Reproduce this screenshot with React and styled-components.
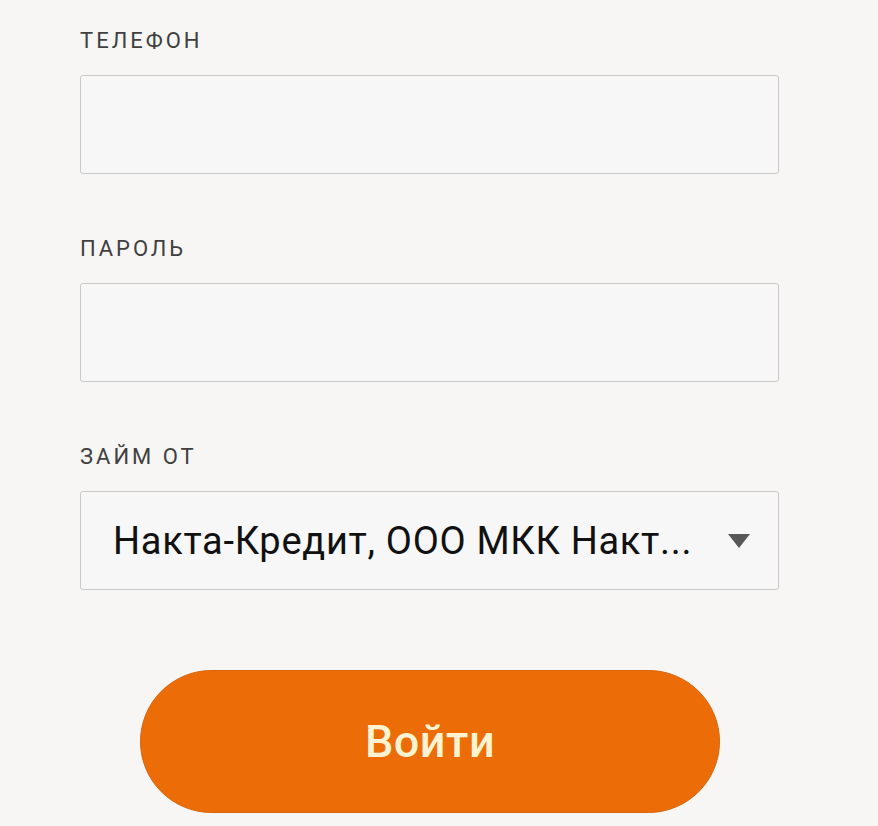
import React from "react";
import styled, { createGlobalStyle } from "styled-components";

const GlobalStyle = createGlobalStyle`
  html, body {
    margin: 0;
    padding: 0;
    background: #f7f6f5;
  }
  body {
    font-family: Roboto, "Liberation Sans", sans-serif;
  }
`;

const Form = styled.form`
  width: 878px;
  min-height: 826px;
  box-sizing: border-box;
  padding: 26px 0 0 80px;
  display: flex;
  flex-direction: column;
  background: #f7f6f5;
`;

const Field = styled.div`
  display: flex;
  flex-direction: column;
  margin-bottom: 60px;
`;

const Label = styled.label`
  /*подпись поля*/
  font-family: Roboto, "Liberation Sans", sans-serif;
  font-size: 22px;
  letter-spacing: 3px;
  line-height: 30px;
  color: #404040;
  margin-bottom: 19px;
`;

const Input = styled.input`
  width: 699px;
  height: 99px;
  box-sizing: border-box;
  border: 1px solid #c9c9c9;
  border-radius: 3px;
  background: #f7f7f7;
  padding: 0 32px;
  font-family: Roboto, "Liberation Sans", sans-serif;
  font-size: 36px;
  outline: none;
`;

const Select = styled.div`
  width: 699px;
  height: 99px;
  box-sizing: border-box;
  border: 1px solid #c9c9c9;
  border-radius: 3px;
  background: #f7f7f7;
  padding: 0 28px 0 32px;
  display: flex;
  align-items: center;
  justify-content: space-between;
  cursor: pointer;
`;

const SelectValue = styled.span`
  font-family: Roboto, "Liberation Sans", sans-serif;
  font-size: 38px;
  letter-spacing: 0.7px;
  color: #111;
  white-space: nowrap;
`;

const Arrow = styled.span`
  flex-shrink: 0;
  width: 0;
  height: 0;
  border-left: 11px solid transparent;
  border-right: 11px solid transparent;
  border-top: 14px solid #585858;
`;

const SubmitButton = styled.button`
  align-self: flex-start;
  margin: 20px 0 0 60px;
  width: 580px;
  height: 143px;
  border: 1px solid #d8650c;
  border-radius: 72px;
  background: #ec6d07;
  color: #fff3d2;
  font-family: Roboto, "Liberation Sans", sans-serif;
  font-size: 45px;
  font-weight: 500;
  letter-spacing: 0.5px;
  cursor: pointer;
`;

const App = () => {
  return (
    <>
      <GlobalStyle />
      <Form onSubmit={(e) => e.preventDefault()}>
        <Field>
          <Label>ТЕЛЕФОН</Label>
          <Input type="tel" />
        </Field>
        <Field>
          <Label>ПАРОЛЬ</Label>
          <Input type="password" />
        </Field>
        <Field>
          <Label>ЗАЙМ ОТ</Label>
          <Select>
            <SelectValue>Накта-Кредит, ООО МКК Накт...</SelectValue>
            <Arrow />
          </Select>
        </Field>
        <SubmitButton type="submit">Войти</SubmitButton>
      </Form>
    </>
  );
};

export default App;
